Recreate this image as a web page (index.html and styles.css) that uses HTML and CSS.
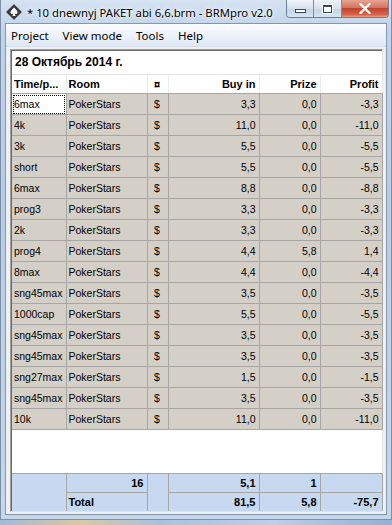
FILE: index.html
```html
<!DOCTYPE html>
<html lang="ru">
<head>
  <meta charset="UTF-8">
  <title>* 10 dnewnyj PAKET abi 6,6.brm - BRMpro v2.0</title>
  <link rel="stylesheet" href="styles.css">
</head>
<body>
  <div class="window">
    <div class="titlebar">
      <svg class="app-icon" width="16" height="16" viewBox="0 0 16 16">
        <path d="M8 0.5 L15.5 8 L8 15.5 L0.5 8 Z" fill="#3a3a3a" stroke="#222" stroke-width="0.6"/>
        <path d="M8 3.5 C9.5 5.5 11.5 6.5 11.5 8.4 C11.5 9.8 9.9 10.4 8.7 9.5 L9.6 12 L6.4 12 L7.3 9.5 C6.1 10.4 4.5 9.8 4.5 8.4 C4.5 6.5 6.5 5.5 8 3.5 Z" fill="#fff"/>
      </svg>
      <span class="title">* 10 dnewnyj PAKET abi 6,6.brm - BRMpro v2.0</span>
      <div class="caption-buttons">
        <div class="cap-btn min"><span class="glyph-min"></span></div>
        <div class="cap-btn max"><span class="glyph-max"></span></div>
        <div class="cap-btn close">
          <svg width="12" height="11" viewBox="0 0 12 11">
            <path d="M1.5 1 L10.5 10 M10.5 1 L1.5 10" stroke="#fff" stroke-width="2.4" stroke-linecap="round"/>
          </svg>
        </div>
      </div>
    </div>

    <div class="client">
      <div class="menubar">
        <span>Project</span>
        <span>View mode</span>
        <span>Tools</span>
        <span>Help</span>
      </div>

      <div class="panel">
        <div class="date-row">28 Октябрь 2014 г.</div>

        <table class="grid">
          <colgroup>
            <col class="c-name"><col class="c-room"><col class="c-cur">
            <col class="c-buy"><col class="c-prize"><col class="c-profit">
          </colgroup>
          <thead>
            <tr>
              <th>Time/p...</th>
              <th>Room</th>
              <th class="center">¤</th>
              <th class="num">Buy in</th>
              <th class="num">Prize</th>
              <th class="num">Profit</th>
            </tr>
          </thead>
          <tbody>
            <tr><td class="focus">6max</td><td>PokerStars</td><td class="center">$</td><td class="num">3,3</td><td class="num">0,0</td><td class="num">-3,3</td></tr>
            <tr><td>4k</td><td>PokerStars</td><td class="center">$</td><td class="num">11,0</td><td class="num">0,0</td><td class="num">-11,0</td></tr>
            <tr><td>3k</td><td>PokerStars</td><td class="center">$</td><td class="num">5,5</td><td class="num">0,0</td><td class="num">-5,5</td></tr>
            <tr><td>short</td><td>PokerStars</td><td class="center">$</td><td class="num">5,5</td><td class="num">0,0</td><td class="num">-5,5</td></tr>
            <tr><td>6max</td><td>PokerStars</td><td class="center">$</td><td class="num">8,8</td><td class="num">0,0</td><td class="num">-8,8</td></tr>
            <tr><td>prog3</td><td>PokerStars</td><td class="center">$</td><td class="num">3,3</td><td class="num">0,0</td><td class="num">-3,3</td></tr>
            <tr><td>2k</td><td>PokerStars</td><td class="center">$</td><td class="num">3,3</td><td class="num">0,0</td><td class="num">-3,3</td></tr>
            <tr><td>prog4</td><td>PokerStars</td><td class="center">$</td><td class="num">4,4</td><td class="num">5,8</td><td class="num">1,4</td></tr>
            <tr><td>8max</td><td>PokerStars</td><td class="center">$</td><td class="num">4,4</td><td class="num">0,0</td><td class="num">-4,4</td></tr>
            <tr><td>sng45max</td><td>PokerStars</td><td class="center">$</td><td class="num">3,5</td><td class="num">0,0</td><td class="num">-3,5</td></tr>
            <tr><td>1000cap</td><td>PokerStars</td><td class="center">$</td><td class="num">5,5</td><td class="num">0,0</td><td class="num">-5,5</td></tr>
            <tr><td>sng45max</td><td>PokerStars</td><td class="center">$</td><td class="num">3,5</td><td class="num">0,0</td><td class="num">-3,5</td></tr>
            <tr><td>sng45max</td><td>PokerStars</td><td class="center">$</td><td class="num">3,5</td><td class="num">0,0</td><td class="num">-3,5</td></tr>
            <tr><td>sng27max</td><td>PokerStars</td><td class="center">$</td><td class="num">1,5</td><td class="num">0,0</td><td class="num">-1,5</td></tr>
            <tr><td>sng45max</td><td>PokerStars</td><td class="center">$</td><td class="num">3,5</td><td class="num">0,0</td><td class="num">-3,5</td></tr>
            <tr><td>10k</td><td>PokerStars</td><td class="center">$</td><td class="num">11,0</td><td class="num">0,0</td><td class="num">-11,0</td></tr>
          </tbody>
        </table>

        <div class="spacer"></div>

        <table class="grid totals">
          <colgroup>
            <col class="c-name"><col class="c-room"><col class="c-cur">
            <col class="c-buy"><col class="c-prize"><col class="c-profit">
          </colgroup>
          <tr>
            <td rowspan="2"></td>
            <td class="num">16</td>
            <td rowspan="2"></td>
            <td class="num">5,1</td>
            <td class="num">1</td>
            <td></td>
          </tr>
          <tr>
            <td>Total</td>
            <td class="num">81,5</td>
            <td class="num">5,8</td>
            <td class="num">-75,7</td>
          </tr>
        </table>
      </div>
    </div>
  </div>
  <div class="desktop"></div>
</body>
</html>
```

FILE: styles.css
```css
:root {
  --cell: #d4d0c8;
  --line: #a7a6a2;
  --total: #c6d9f0;
}

html, body {
  margin: 0;
  padding: 0;
}

body {
  width: 392px;
  height: 525px;
  overflow: hidden;
  background: #b9cde3;
  font-family: "Liberation Sans", Arial, sans-serif;
  font-size: 10.5px;
  color: #000;
}

.window {
  height: 520px;
  box-sizing: border-box;
  padding: 0 4px 4px 4px;
  display: flex;
  flex-direction: column;
  background: linear-gradient(to bottom, #d5e3f2 0, #bfd3ea 30px, #b6cbe4 200px, #c6d7ea 520px);
  border-left: 1px solid #7b8fa6;
  border-right: 1px solid #7b8fa6;
  border-bottom: 1px solid #7b8fa6;
}

.titlebar {
  height: 23px;
  display: flex;
  align-items: center;
  position: relative;
}

.app-icon {
  margin: 0 5px 0 1px;
}

.title {
  font-family: "Noto Sans", "Open Sans", sans-serif;
  font-size: 11.3px;
  padding-top: 1px;
  color: #000;
  text-shadow: 0 0 6px #fff, 0 0 3px #fff;
}

.caption-buttons {
  position: absolute;
  top: 0;
  right: -2px;
  display: flex;
  height: 17px;
  border: 1px solid #6f7f92;
  border-top: none;
  border-radius: 0 0 4px 4px;
  overflow: hidden;
}

.cap-btn {
  height: 17px;
  display: flex;
  align-items: center;
  justify-content: center;
  background: linear-gradient(to bottom, #eef3f9 0, #d6e2ef 50%, #c3d3e6 51%, #d6e4f2 100%);
}

.cap-btn.min {
  width: 26px;
  border-right: 1px solid #7e8fa3;
}

.cap-btn.max {
  width: 27px;
  border-right: 1px solid #7e8fa3;
}

.cap-btn.close {
  width: 46px;
  background: linear-gradient(to bottom, #e8a493 0, #d2735e 45%, #c2432b 50%, #d5634a 85%, #e8a084 100%);
}

.glyph-min {
  width: 9px;
  height: 2px;
  margin-top: 5px;
  border: 1px solid #39475a;
  background: #fff;
}

.glyph-max {
  width: 7px;
  height: 5px;
  border: 1px solid #39475a;
  border-top-width: 2px;
  background: #fff;
  box-shadow: 0 0 0 1px #fff;
}

.client {
  flex: 1;
  display: flex;
  flex-direction: column;
  background: #f0f0f0;
  border: 1px solid #8196b0;
}

.menubar {
  height: 22px;
  display: flex;
  align-items: center;
  background: linear-gradient(to bottom, #fbfcfe 0, #eef3fa 50%, #dfe8f4 100%);
  border-bottom: 1px solid #d5dde8;
  font-family: "Noto Sans", "Open Sans", sans-serif;
  font-size: 11.5px;
}

.menubar span {
  padding: 0 8px 0 5px;
}

.menubar span + span {
  padding-left: 6px;
}

.panel {
  flex: 1;
  margin: 2px 3px 2px 4px;
  display: flex;
  flex-direction: column;
  background: #fff;
  border: 1px solid #a0a0a0;
  border-right-color: #e3e3e3;
  border-bottom-color: #e3e3e3;
  box-shadow: inset 1px 1px 0 #696969;
}

.date-row {
  height: 24px;
  line-height: 25px;
  padding-left: 3px;
  font-size: 12px;
  font-weight: bold;
  border-bottom: 1px solid #e6e6e6;
  margin-left: 1px;
}

.grid {
  width: 370px;
  margin-left: 1px;
  table-layout: fixed;
  border-collapse: collapse;
}

.c-name { width: 54px; }
.c-room { width: 81px; }
.c-cur { width: 21px; }
.c-buy { width: 91px; }
.c-prize { width: 61px; }
.c-profit { width: 62px; }

.grid th {
  height: 18px;
  padding: 0 3px 0 2px;
  text-align: left;
  font-weight: bold;
  font-size: 11px;
  background: #fff;
  border-right: 1px solid #ececec;
  border-bottom: 1px solid var(--line);
}

.grid td {
  height: 20px;
  padding: 0 3px 0 2px;
  background: var(--cell);
  border: 1px solid var(--line);
  border-top: none;
  white-space: nowrap;
  overflow: hidden;
}

.grid td:first-child {
  border-left: none;
  padding-right: 0;
}

.grid .num {
  text-align: right;
}

.grid .center {
  text-align: center;
}

.grid td.focus {
  background: #fff;
  outline: 1px dotted #000;
  outline-offset: -2px;
}

.spacer {
  flex: 1;
}

.totals td {
  height: 18px;
  font-weight: bold;
  font-size: 11px;
  background: var(--total);
  border-top: 1px solid var(--line);
  border-bottom: none;
}

.totals tr + tr td {
  border-top: 1px solid var(--line);
}

.desktop {
  height: 5px;
  background: linear-gradient(to right, #9fbbd9, #d9c9a0 20%, #a8c2de 40%, #bcd0e6 70%, #92b1d3);
}
```
